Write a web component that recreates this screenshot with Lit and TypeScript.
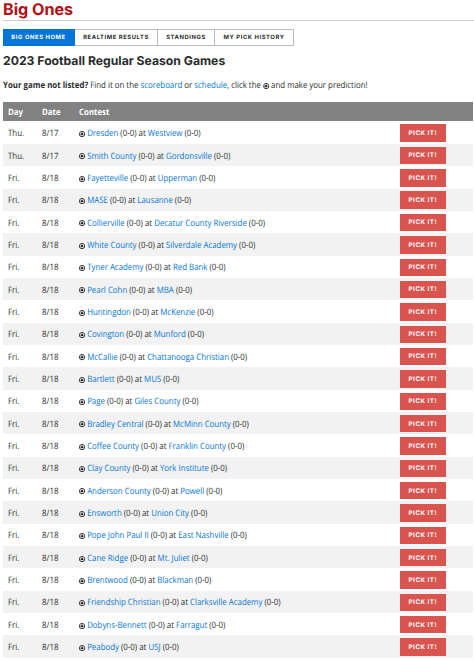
import { customElement, property } from "lit/decorators.js";

import { css, html, LitElement } from "lit";

type Game = [day: string, date: string, away: string, home: string];

const GAMES: Game[] = [
    ["Thu.", "8/17", "Dresden", "Westview"],
    ["Thu.", "8/17", "Smith County", "Gordonsville"],
    ["Fri.", "8/18", "Fayetteville", "Upperman"],
    ["Fri.", "8/18", "MASE", "Lausanne"],
    ["Fri.", "8/18", "Collierville", "Decatur County Riverside"],
    ["Fri.", "8/18", "White County", "Silverdale Academy"],
    ["Fri.", "8/18", "Tyner Academy", "Red Bank"],
    ["Fri.", "8/18", "Pearl Cohn", "MBA"],
    ["Fri.", "8/18", "Huntingdon", "McKenzie"],
    ["Fri.", "8/18", "Covington", "Munford"],
    ["Fri.", "8/18", "McCallie", "Chattanooga Christian"],
    ["Fri.", "8/18", "Bartlett", "MUS"],
    ["Fri.", "8/18", "Page", "Giles County"],
    ["Fri.", "8/18", "Bradley Central", "McMinn County"],
    ["Fri.", "8/18", "Coffee County", "Franklin County"],
    ["Fri.", "8/18", "Clay County", "York Institute"],
    ["Fri.", "8/18", "Anderson County", "Powell"],
    ["Fri.", "8/18", "Ensworth", "Union City"],
    ["Fri.", "8/18", "Pope John Paul II", "East Nashville"],
    ["Fri.", "8/18", "Cane Ridge", "Mt. Juliet"],
    ["Fri.", "8/18", "Brentwood", "Blackman"],
    ["Fri.", "8/18", "Friendship Christian", "Clarksville Academy"],
    ["Fri.", "8/18", "Dobyns-Bennett", "Farragut"],
    ["Fri.", "8/18", "Peabody", "USJ"],
];

@customElement("pick-icon")
class PickIcon extends LitElement {
    static get styles() {
        return css`
            :host {
                display: inline-block;
                width: 6.8px;
                height: 6.2px;
                vertical-align: -1px;
            }

            svg {
                display: block;
                width: 100%;
                height: 100%;
            }
        `;
    }

    protected render() {
        return html`
            <svg viewBox="0 0 16 16" preserveAspectRatio="none">
                <circle cx="8" cy="8" r="7" fill="#fff" stroke="#222" stroke-width="2"></circle>
                <path
                    d="M8 4.6l3.4 2.5-1.3 4H5.9l-1.3-4z M4 1.8L8 3.6l4-1.8z M1 8.6l2.4-2.4.2 4-1.4 2z M15 8.6l-2.4-2.4-.2 4 1.4 2z M5 15l1.2-2.2h3.6L11 15z"
                    fill="#222"
                ></path>
            </svg>
        `;
    }
}

@customElement("game-row")
class GameRow extends LitElement {
    @property({ attribute: false })
    game: Game = ["", "", "", ""];

    static get styles() {
        return css`
            :host {
                display: grid;
                grid-template-columns: 34px 37.5px 1fr 73px;
                align-items: center;
                height: 22.35px;
                padding-left: 4.7px;
                box-sizing: border-box;
            }

            span {
                padding-top: 1px;
                transform: scaleX(0.894);
                transform-origin: left;
                white-space: nowrap;
            }

            a {
                color: #0275d8;
            }

            .pick {
                justify-self: start;
                width: 45.7px;
                height: 17.4px;
                margin-top: 1px;
                box-sizing: border-box;
                padding: 1.6px 0 0;
                border: 0;
                background-color: #d9534f;
                color: #fff;
                font: 700 6.3px/15.8px Inter, sans-serif;
                letter-spacing: 0.5px;
                text-align: center;
                text-rendering: inherit;
            }
        `;
    }

    protected render() {
        const [day, date, away, home] = this.game;
        return html`
            <span>${day}</span>
            <span>${date}</span>
            <span><pick-icon></pick-icon> <a>${away}</a> (0-0) at <a>${home}</a> (0-0)</span>
            <button class="pick">PICK IT!</button>
        `;
    }
}

@customElement("app-root")
class AppRoot extends LitElement {
    static get styles() {
        return css`
            :host {
                display: block;
                height: 667px;
                box-sizing: border-box;
                padding: 0 0 0 3px;
                overflow: hidden;
                background-color: #fff;
                color: #292b2c;
                font: 8.8px/12px "Open Sans", sans-serif;
                text-rendering: geometricPrecision;
            }

            h1 {
                height: 20.5px;
                margin: 0;
                border-bottom: 1px solid #ccc;
                box-sizing: border-box;
                color: #b30e16;
                font: 700 16.1px/19px Inter, sans-serif;
            }

            nav {
                display: flex;
                width: max-content;
                height: 17px;
                margin-top: 8px;
            }

            .tab {
                box-sizing: border-box;
                border: 1px solid #bbb;
                border-left-width: 0;
                font: 700 5.8px/16px Inter, sans-serif;
                letter-spacing: 0.6px;
                text-align: center;
            }

            .tab.active {
                border-color: #0275d8;
                background-color: #0275d8;
                color: #fff;
            }

            .home {
                width: 72px;
            }

            .results {
                width: 83px;
            }

            .standings {
                width: 57px;
            }

            .history {
                width: 79px;
            }

            h2 {
                height: 16px;
                margin: 7.5px 0 0;
                font: 700 12.2px/16px Inter, sans-serif;
            }

            p {
                margin: 10.3px 0 0;
                transform: scaleX(0.894);
                transform-origin: left;
                white-space: nowrap;
            }

            p a {
                color: #0275d8;
            }

            .head {
                display: grid;
                grid-template-columns: 34px 37.5px 1fr;
                align-items: center;
                height: 19.2px;
                margin-top: 11px;
                padding-left: 4.7px;
                background-color: #818181;
                color: #fff;
                font-weight: 700;
            }

            .head span {
                transform: scaleX(0.894);
                transform-origin: left;
            }

            .games {
                margin-right: 1px;
            }

            game-row:nth-child(odd) {
                background-color: #f2f2f2;
            }
        `;
    }

    protected render() {
        return html`
            <h1>Big Ones</h1>
            <nav>
                <a class="tab home active">BIG ONES HOME</a>
                <a class="tab results">REALTIME RESULTS</a>
                <a class="tab standings">STANDINGS</a>
                <a class="tab history">MY PICK HISTORY</a>
            </nav>
            <h2>2023 Football Regular Season Games</h2>
            <p>
                <b>Your game not listed?</b> Find it on the <a>scoreboard</a> or <a>schedule</a>,
                click the <pick-icon></pick-icon> and make your prediction!
            </p>
            <div class="games">
                <div class="head"><span>Day</span><span>Date</span><span>Contest</span></div>
                ${GAMES.map((game) => html`<game-row .game=${game}></game-row>`)}
            </div>
        `;
    }
}

export default AppRoot;
